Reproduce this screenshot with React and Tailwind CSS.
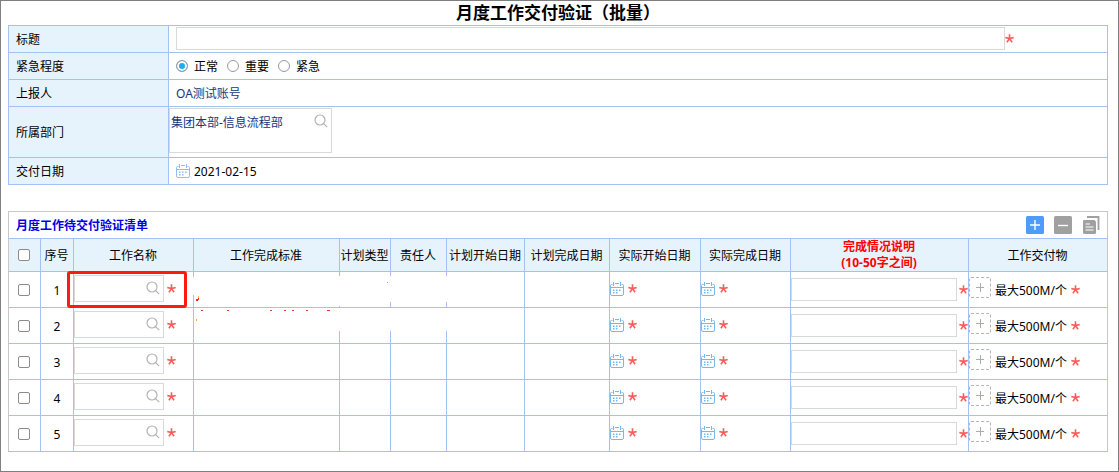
import { useState } from 'react';

const PRIORITIES = ['正常', '重要', '紧急'];

const COLUMNS = [
  { key: 'name', label: '工作名称', width: 'w-[120px]' },
  { key: 'standard', label: '工作完成标准', width: 'w-[146px]' },
  { key: 'type', label: '计划类型', width: 'w-[51px]' },
  { key: 'owner', label: '责任人', width: 'w-[56px]' },
  { key: 'planStart', label: '计划开始日期', width: 'w-[78px]' },
  { key: 'planEnd', label: '计划完成日期', width: 'w-[85px]' },
  { key: 'realStart', label: '实际开始日期', width: 'w-[91px]' },
  { key: 'realEnd', label: '实际完成日期', width: 'w-[90px]' },
  { key: 'remark', label: '完成情况说明', note: '(10-50字之间)', width: 'w-[178px]' },
  { key: 'file', label: '工作交付物', width: 'w-[139px]' },
];

const ROWS = [1, 2, 3, 4, 5];

const checkboxClass =
  'block ml-[9px] w-3 h-3 appearance-none bg-white border border-[#8c8c8c] rounded-[2px] checked:bg-[#2db7f5]';

function Required() {
  return (
    <svg className="w-[9px] h-[9px] shrink-0" viewBox="0 0 9 9" fill="none" stroke="#ff5a5a" strokeWidth="1.6" aria-label="必填">
      <path d="M4.5 0.3V4.6M0.3 3.5L4.5 4.6L8.7 3.5M1.9 8.3L4.5 4.6L7.1 8.3" />
    </svg>
  );
}

function SearchIcon() {
  return (
    <svg className="w-[14px] h-[14px]" viewBox="0 0 14 14" fill="none" stroke="#b3b3b3" strokeWidth="1.2">
      <circle cx="6" cy="6" r="5" />
      <path d="M9.6 9.6L13.2 13.2" />
    </svg>
  );
}

function CalendarIcon({ className }) {
  return (
    <svg className={`w-[14px] h-[14px] shrink-0 ${className}`} viewBox="0 0 14 14" fill="none" stroke="currentColor">
      <path d="M2.5 2.5H1.5Q0.5 2.5 0.5 3.5V12Q0.5 13.5 2 13.5H12Q13.5 13.5 13.5 12V3.5Q13.5 2.5 12.5 2.5H11.5M5 1.5H9M0.5 5.5H13.5" />
      <path d="M3.5 0V4M10.5 0V4" />
      <path strokeWidth="1.4" d="M3 8.3H4.5M6 8.3H7.5M9 8.3H10.5M3 10.8H4.5M6 10.8H7.5" />
    </svg>
  );
}

function FormRow({ label, height, children }) {
  return (
    <tr className={height}>
      <th scope="row" className="w-[160px] pt-0.5 pl-[7px] text-left font-normal bg-[#e7f3fc] border-r border-b border-[#a3c1f3]">
        {label}
      </th>
      <td className="border-r border-b border-[#a3c1f3]">{children}</td>
    </tr>
  );
}

function DateCell({ label }) {
  return (
    <td className="pb-0.5 border-r border-b border-[#a3c1f3]">
      <div className="flex items-center gap-1">
        <button type="button" aria-label={label}>
          <CalendarIcon className="text-[#72b9ef]" />
        </button>
        <Required />
      </div>
    </td>
  );
}

// Blanked-out area over the plan columns of the first two rows
function Redaction({ row }) {
  if (row === 1) {
    return (
      <>
        <span className="absolute -left-px top-[5px] w-5 h-[18px] bg-white" />
        <span className="absolute left-1.5 top-1 w-[140px] h-[30px] bg-white" />
        <span className="absolute left-[146px] top-1 w-[107px] h-[26px] bg-white" />
        <svg className="absolute left-0 top-0 w-[200px] h-[35px]" viewBox="0 0 200 35">
          <path d="M2 27h2v-1h1v2h-1v1h-2z" fill="#f03020" />
          <path d="M4 24h1v2h-1z" fill="#ffb060" />
          <path d="M193 10h1v1h-1z" fill="#f08090" />
        </svg>
      </>
    );
  }
  return (
    <>
      <span className="absolute left-0.5 top-0 w-[251px] h-[23px] bg-white" />
      <svg className="absolute left-0 top-0 w-[146px] h-[23px]" viewBox="0 0 146 23">
        <path d="M7 2h2v1h-2zM33 2h2v1h-2zM76 2h2v1h-2zM90 2h2v1h-2zM98 2h2v1h-2zM112 2h2v1h-2zM133 2h3v1h-3z" fill="#e83838" />
        <path d="M2 11h1v2h-1z" fill="#ffa040" />
      </svg>
    </>
  );
}

function TaskRow({ no, highlighted }) {
  return (
    <tr className="h-9">
      <td className="border-r border-b border-[#a3c1f3] border-l border-l-[#c8c8c8]">
        <input type="checkbox" aria-label={`选择第${no}行`} className={checkboxClass} />
      </td>
      <td className="pt-0.5 text-center border-r border-b border-[#a3c1f3]">{no}</td>
      <td className="relative pb-0.5 border-r border-b border-[#a3c1f3]">
        <div className="flex items-center gap-[3px]">
          <div className="relative">
            <input type="text" aria-label={`工作名称${no}`} className="block w-[90px] h-[27px] pl-0.5 pr-5 bg-white border border-[#d9d9d9] outline-none" />
            <button type="button" aria-label="搜索" className="absolute right-1 top-1.5">
              <SearchIcon />
            </button>
          </div>
          <Required />
        </div>
        {highlighted && (
          <span className="absolute z-20 -left-[7px] -top-px w-[120px] h-[37px] border-3 border-[#fb1c0f] rounded-[3px] pointer-events-none" />
        )}
      </td>
      <td className="relative z-10 border-r border-b border-[#a3c1f3]">{no < 3 && <Redaction row={no} />}</td>
      <td className="border-r border-b border-[#a3c1f3]" />
      <td className="border-r border-b border-[#a3c1f3]" />
      <td className="border-r border-b border-[#a3c1f3]" />
      <td className="border-r border-b border-[#a3c1f3]" />
      <DateCell label="实际开始日期" />
      <DateCell label="实际完成日期" />
      <td className="border-r border-b border-[#a3c1f3]">
        <div className="flex items-center gap-0.5">
          <input type="text" aria-label={`完成情况说明${no}`} className="flex-1 min-w-0 h-[23px] px-1 bg-white border border-[#d9d9d9] outline-none" />
          <Required />
        </div>
      </td>
      <td className="border-r border-b border-[#a3c1f3] border-r-[#c8c8c8]">
        <div className="flex items-center gap-1">
          <button type="button" aria-label="上传附件" className="flex items-center justify-center w-[22px] h-[21px] mb-1 border border-dashed border-[#b5b5b5] rounded-[2px]">
            <svg className="w-[8px] h-[9px]" viewBox="0 0 8 9" fill="none" stroke="#a5b0a5">
              <path d="M4.5 0V9M0 4.5H8" />
            </svg>
          </button>
          <span className="pt-0.5 whitespace-nowrap">最大500M/个</span>
          <Required />
        </div>
      </td>
    </tr>
  );
}

export default function App() {
  const [priority, setPriority] = useState('正常');

  return (
    <main className="bg-white border border-[#7f7f7f] pl-[7px] pr-[10px] pb-[19px] text-xs text-black font-['Noto_Sans','Noto_Sans_CJK_SC',sans-serif]">
      <h1 className="h-6 text-center text-[17px] leading-6 font-bold">月度工作交付验证（批量）</h1>

      <table className="w-full table-fixed border-separate border-spacing-0 border-t border-l border-[#a3c1f3]">
        <tbody>
          <FormRow label={<label htmlFor="title">标题</label>} height="h-[27px]">
            <div className="flex items-center pl-[7px] pb-px">
              <input id="title" type="text" className="w-[89%] h-[23px] px-1 bg-white border border-[#d9d9d9] outline-none" />
              <Required />
            </div>
          </FormRow>
          <FormRow label="紧急程度" height="h-[27px]">
            <div className="flex items-center gap-[9px] pl-[7px]">
              {PRIORITIES.map((p) => (
                <label key={p} className="flex items-center gap-1.5">
                  <input
                    type="radio"
                    name="priority"
                    checked={priority === p}
                    onChange={() => setPriority(p)}
                    className="w-3 h-3 appearance-none rounded-full border border-[#999] bg-white checked:bg-[#22aaf0] checked:shadow-[inset_0_0_0_2px_#fff]"
                  />
                  <span className="pt-0.5">{p}</span>
                </label>
              ))}
            </div>
          </FormRow>
          <FormRow label="上报人" height="h-[27px]">
            <a href="#user" className="block pt-0.5 pl-[7px] text-[#173580]">OA测试账号</a>
          </FormRow>
          <FormRow label={<label htmlFor="dept">所属部门</label>} height="h-[51px]">
            <div className="relative w-[163px] mb-[3px]">
              <textarea
                id="dept"
                defaultValue="集团本部-信息流程部"
                className="block w-full h-[45px] pl-px pr-6 pt-[5px] leading-[18px] resize-none overflow-hidden text-[#173580] bg-white border border-[#d9d9d9] outline-none"
              />
              <button type="button" aria-label="搜索部门" className="absolute right-1 top-1.5">
                <SearchIcon />
              </button>
            </div>
          </FormRow>
          <FormRow label="交付日期" height="h-[27px]">
            <div className="flex items-center gap-1 pl-[7px]">
              <button type="button" aria-label="选择日期">
                <CalendarIcon className="text-[#94bdee]" />
              </button>
              <time dateTime="2021-02-15" className="pt-0.5">2021-02-15</time>
            </div>
          </FormRow>
        </tbody>
      </table>

      <section className="mt-[26px]">
        <div className="flex items-center justify-between h-[27px] px-[7px] border border-b-0 border-[#c8c8c8]">
          <h2 className="pt-0.5 font-bold text-[#0000e6]">月度工作待交付验证清单</h2>
          <div className="flex items-center gap-2.5">
            <button type="button" aria-label="添加" className="w-[18px] h-[18px]">
              <svg viewBox="0 0 18 18" fill="none">
                <rect width="18" height="18" rx="1.5" fill="#4f9bfa" />
                <path d="M9 4V14M4 9H14" stroke="#fff" strokeWidth="1.4" />
              </svg>
            </button>
            <button type="button" aria-label="删除" className="w-[18px] h-[18px]">
              <svg viewBox="0 0 18 18" fill="none">
                <rect width="18" height="18" rx="1.5" fill="#a0a0a0" />
                <path d="M4 9.5H14" stroke="#fff" strokeWidth="1.4" />
              </svg>
            </button>
            <button type="button" aria-label="复制" className="w-[18px] h-[18px]">
              <svg viewBox="0 0 18 18" fill="none">
                <path d="M5 1H16.5V14" stroke="#a0a0a0" strokeWidth="1.8" />
                <path d="M2 4H12.5L14 5.5V16.5Q14 18 12.5 18H3Q1 18 1 16.5V5Q1 4 2 4Z" fill="#a0a0a0" />
                <path d="M3.5 8H8M3.5 11H11.5M3.5 14H11.5" stroke="#fff" strokeWidth="1.2" />
              </svg>
            </button>
          </div>
        </div>

        <table className="w-full table-fixed border-separate border-spacing-0">
          <colgroup>
            <col className="w-[33px]" />
            <col className="w-[33px]" />
            {COLUMNS.map((c) => (
              <col key={c.key} className={c.width} />
            ))}
          </colgroup>
          <thead className="bg-[#e7f3fc]">
            <tr className="h-[34px]">
              <th className="border-y border-r border-[#a3c1f3] border-l border-l-[#c8c8c8]">
                <input type="checkbox" aria-label="全选" className={checkboxClass} />
              </th>
              <th className="pt-0.5 pr-px font-normal border-y border-r border-[#a3c1f3]">序号</th>
              {COLUMNS.map((c) => (
                <th key={c.key} className="pt-0.5 pr-px font-normal leading-4 whitespace-nowrap border-y border-r border-[#a3c1f3] last:border-r-[#c8c8c8]">
                  {c.note ? (
                    <span className="block -mt-0.5 font-bold text-[#ff0000]">
                      {c.label}
                      <br />
                      {c.note}
                    </span>
                  ) : (
                    c.label
                  )}
                </th>
              ))}
            </tr>
          </thead>
          <tbody>
            {ROWS.map((no) => (
              <TaskRow key={no} no={no} highlighted={no === 1} />
            ))}
          </tbody>
        </table>
      </section>
    </main>
  );
}
